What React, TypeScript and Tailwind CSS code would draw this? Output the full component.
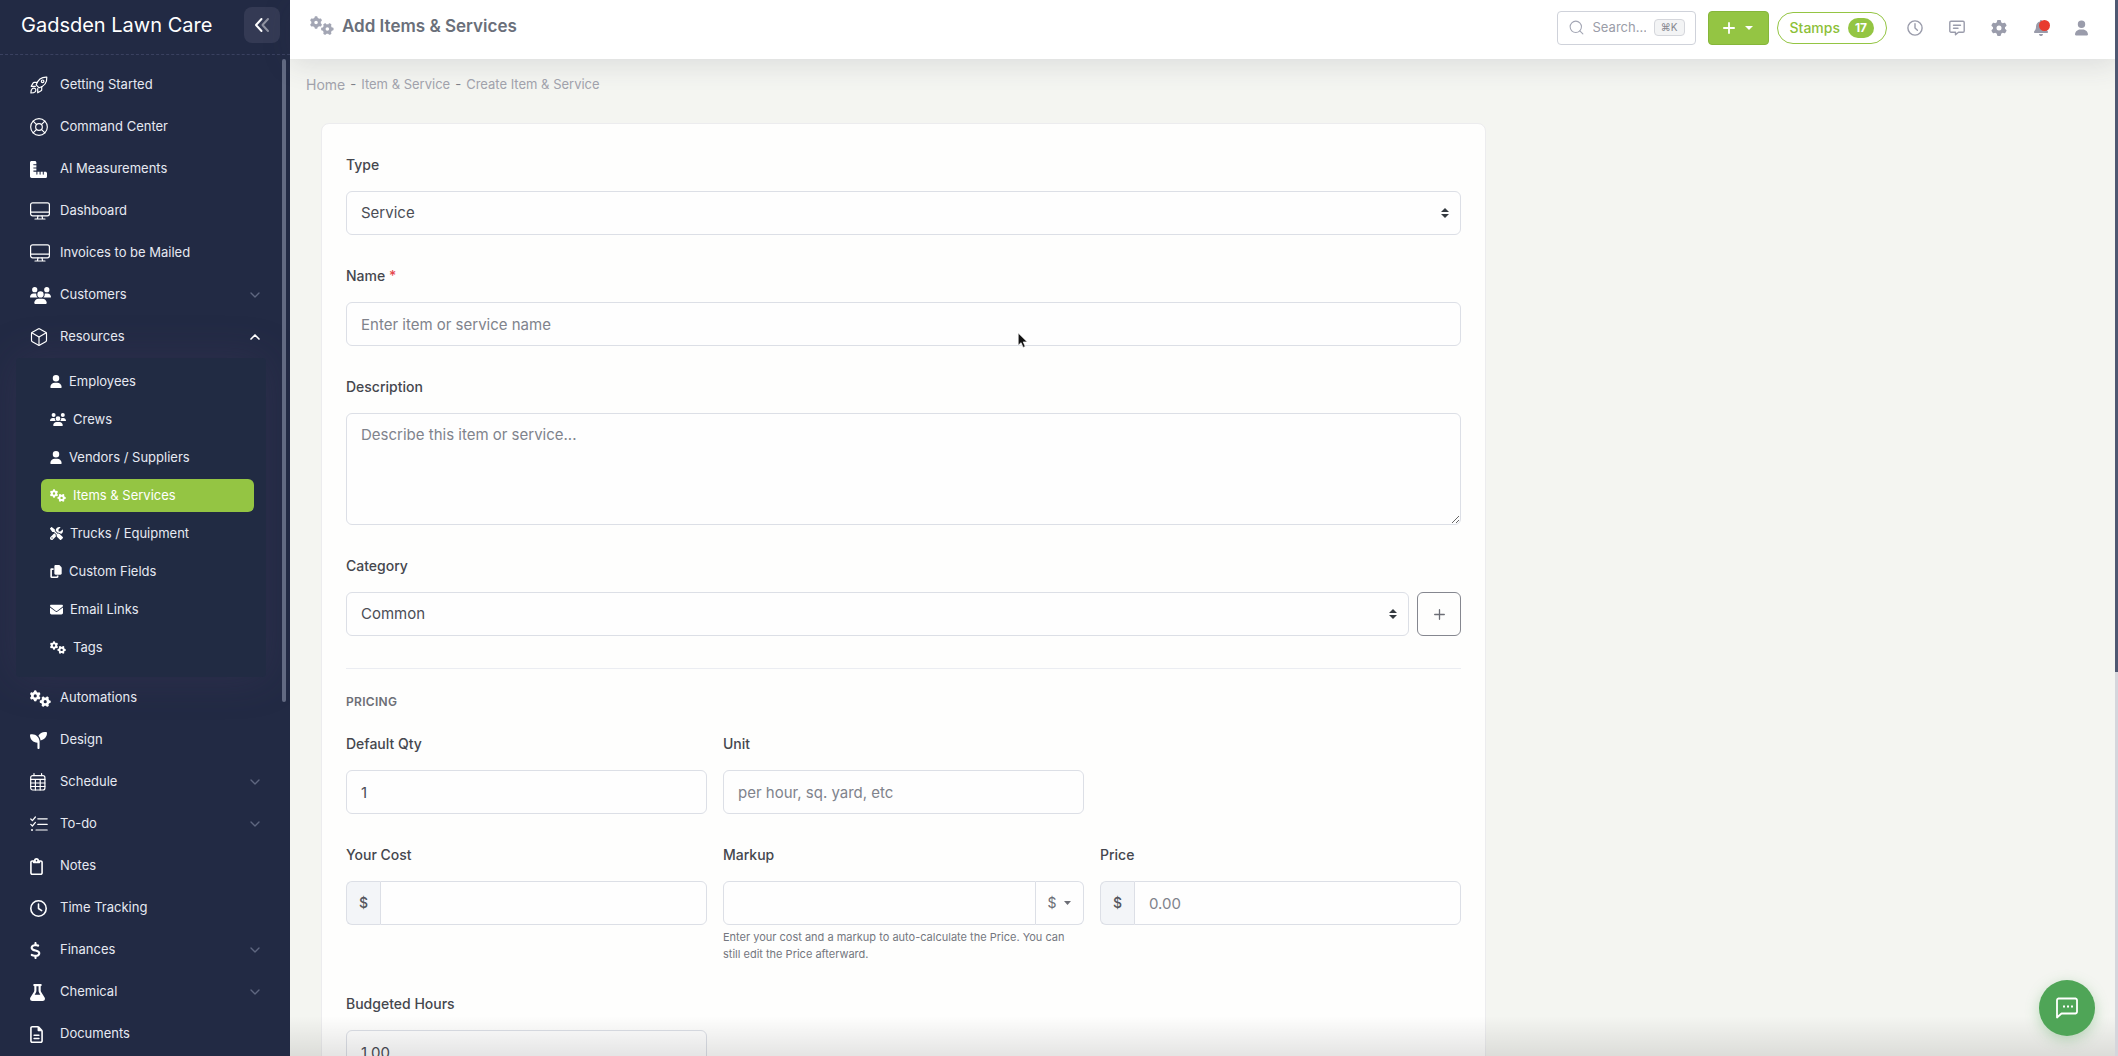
import React, { useState } from 'react';
import { Box, ChevronDown, ChevronUp, LifeBuoy, Search } from 'lucide-react';
import {
  FaBell,
  FaCopy,
  FaDollarSign,
  FaEnvelope,
  FaFlask,
  FaGear,
  FaGears,
  FaRegClipboard,
  FaRegClock,
  FaRegFileLines,
  FaRulerCombined,
  FaScrewdriverWrench,
  FaSeedling,
  FaUser,
  FaUsers,
} from 'react-icons/fa6';

interface MenuItem {
  label: string;
  icon: React.ReactNode;
  expandable?: boolean;
  children?: MenuItem[];
}

interface FieldProps {
  id: string;
  label: string;
  required?: boolean;
  children: React.ReactNode;
}

const inputClass =
  'block h-11 w-full min-w-0 rounded-md border border-[#dcdfe6] bg-[#fefefe] px-3.5 text-[15px] text-[#4b4d55] placeholder:text-[#80838c] outline-none focus:border-[#94c543]';

const addonClass =
  'flex w-[34px] shrink-0 items-center justify-center rounded-l-md border border-r-0 border-[#dcdfe6] bg-[#f3f5f8] text-sm font-medium text-[#55575e]';

function RocketIcon() {
  return (
    <svg className="h-[18px] w-[18px]" viewBox="0 0 18 18" fill="none" stroke="currentColor" strokeWidth="1.2" strokeLinecap="round" strokeLinejoin="round">
      <path d="M6.200 8.800C7.600 4.600 10.600.8 16.800 1.100c.4 6.200-3.400 9.300-7.700 10.700z" />
      <path d="M7.200 6.300H4.300c-.5 0-.9.2-1.100.6L1.200 10.300h4.200M11.700 10.800v2.900c0 .5-.2.900-.6 1.100L7.700 16.800v-4.200" />
      <path d="M5.300 12.700c-.8-.9-2.500-.8-3.300.1-.9.9-1.100 3.100-1.100 4.200 1.100 0 3.300-.2 4.200-1.100.9-.8 1-2.400.2-3.200z" />
      <circle cx="12.600" cy="5.300" r="1.300" />
    </svg>
  );
}

function DesktopIcon() {
  return (
    <svg className="h-[18px] w-5" viewBox="0 0 20 18" fill="none" stroke="currentColor" strokeWidth="1.2">
      <rect x="0.6" y="0.8" width="18.8" height="13" rx="2" />
      <path d="M0.6 10.2h18.8M8 13.8l-.6 3M12 13.8l.6 3M5 17h10" strokeLinecap="round" />
    </svg>
  );
}

function CalendarIcon() {
  return (
    <svg className="h-[18px] w-4" viewBox="0 0 16 18" fill="none" stroke="currentColor" strokeWidth="1.2">
      <rect x="0.7" y="2.6" width="14.2" height="14.4" rx="2" />
      <path d="M4 .6v2M11.6.6v2M.7 6.4h14.2M.7 10h14.2M.7 13.5h14.2M5.4 6.4V17M10.2 6.4V17" strokeLinecap="round" />
    </svg>
  );
}

function TasksIcon() {
  return (
    <svg className="h-[18px] w-[18px]" viewBox="0 0 18 18" fill="none" stroke="currentColor" strokeWidth="1.2" strokeLinecap="round" strokeLinejoin="round">
      <path d="M.8 4l1.6 1.6L5.4 2M.8 9.4L2.4 11l3-3.600M7.8 3.8h9.400M7.8 9.4h9.400M6 15h11.200" />
      <circle cx="2" cy="15" r="1" fill="currentColor" stroke="none" />
    </svg>
  );
}

function CollapseIcon() {
  return (
    <svg className="h-4 w-4" viewBox="0 0 16 16" fill="none" stroke="currentColor" strokeWidth="2" strokeLinecap="round" strokeLinejoin="round">
      <path d="M7.500 2L2 8l5.500 6" />
      <path d="M14 2L8.500 8l5.500 6" opacity="0.45" />
    </svg>
  );
}

function SortIcon() {
  return (
    <svg className="pointer-events-none absolute top-1/2 right-3 h-[10px] w-2 -translate-y-1/2" viewBox="0 0 8 10" fill="#343a40">
      <path d="M4 0L0 4h8zM4 10L0 6h8z" />
    </svg>
  );
}

function ClockIcon() {
  return (
    <svg className="h-4 w-4" viewBox="0 0 16 16" fill="none" stroke="currentColor" strokeWidth="1.4" strokeLinecap="round" strokeLinejoin="round">
      <circle cx="8" cy="8" r="7.100" />
      <path d="M8 3.800V8l2.400 2.200" />
    </svg>
  );
}

function MessageIcon() {
  return (
    <svg className="h-4 w-4" viewBox="0 0 16 16" fill="none" stroke="currentColor" strokeWidth="1.4" strokeLinejoin="round" strokeLinecap="round">
      <path d="M2 1.200h12a1.200 1.200 0 0 1 1.200 1.200v8.600a1.200 1.200 0 0 1-1.200 1.200H9.500L6.500 14.800v-2.600H2A1.200 1.200 0 0 1 .8 11V2.400A1.200 1.200 0 0 1 2 1.200z" />
      <path d="M4.500 5.200h7M4.500 8.200h4.500" />
    </svg>
  );
}

const menu: MenuItem[] = [
  { label: 'Getting Started', icon: <RocketIcon /> },
  { label: 'Command Center', icon: <LifeBuoy className="-ml-px h-5 w-5" strokeWidth={1.4} /> },
  { label: 'AI Measurements', icon: <FaRulerCombined className="h-[17px] w-[17px]" /> },
  { label: 'Dashboard', icon: <DesktopIcon /> },
  { label: 'Invoices to be Mailed', icon: <DesktopIcon /> },
  { label: 'Customers', icon: <FaUsers className="h-[17px] w-[21px]" />, expandable: true },
  {
    label: 'Resources',
    icon: <Box className="-ml-px h-5 w-5" strokeWidth={1.4} />,
    expandable: true,
    children: [
      { label: 'Employees', icon: <FaUser className="h-[13px] w-3" /> },
      { label: 'Crews', icon: <FaUsers className="h-[13px] w-4" /> },
      { label: 'Vendors / Suppliers', icon: <FaUser className="h-[13px] w-3" /> },
      { label: 'Items & Services', icon: <FaGears className="h-[13px] w-4" /> },
      { label: 'Trucks / Equipment', icon: <FaScrewdriverWrench className="h-[13px] w-[13px]" /> },
      { label: 'Custom Fields', icon: <FaCopy className="h-[13px] w-3" /> },
      { label: 'Email Links', icon: <FaEnvelope className="h-[13px] w-[13px]" /> },
      { label: 'Tags', icon: <FaGears className="h-[13px] w-4" /> },
    ],
  },
  { label: 'Automations', icon: <FaGears className="h-[17px] w-[21px]" /> },
  { label: 'Design', icon: <FaSeedling className="h-[17px] w-[17px]" /> },
  { label: 'Schedule', icon: <CalendarIcon />, expandable: true },
  { label: 'To-do', icon: <TasksIcon />, expandable: true },
  { label: 'Notes', icon: <FaRegClipboard className="h-[17px] w-[13px]" /> },
  { label: 'Time Tracking', icon: <FaRegClock className="h-[17px] w-[17px]" /> },
  { label: 'Finances', icon: <FaDollarSign className="h-[17px] w-[11px]" />, expandable: true },
  { label: 'Chemical', icon: <FaFlask className="h-[17px] w-[15px]" />, expandable: true },
  { label: 'Documents', icon: <FaRegFileLines className="h-[17px] w-[13px]" /> },
];

function Sidebar() {
  const [active, setActive] = useState('Items & Services');

  return (
    <aside className="relative flex w-[290px] shrink-0 flex-col bg-[#222a44] text-[#e6e9f2]">
      <div className="flex h-[55px] shrink-0 items-center justify-between border-b border-dashed border-[#3a4160] pr-2.5 pb-1 pl-[21px]">
        <span className="text-xl text-white">Gadsden Lawn Care</span>
        <button type="button" aria-label="Collapse sidebar" className="flex h-9 w-9 items-center justify-center rounded-lg bg-[#343a54] text-white">
          <CollapseIcon />
        </button>
      </div>
      <nav className="min-h-0 flex-1 overflow-hidden pt-[9px] text-[13px]">
        <ul>
          {menu.map(item => (
            <li key={item.label}>
              <a href="#" className="relative z-10 flex h-[42px] items-center pr-[27px] pl-[30px] hover:text-white">
                <span className="flex w-[30px] shrink-0 items-center text-white">{item.icon}</span>
                <span className="flex-1">{item.label}</span>
                {item.expandable &&
                  (item.children ? (
                    <ChevronUp className="h-4 w-4 text-white" strokeWidth={2.5} />
                  ) : (
                    <ChevronDown className="h-4 w-4 text-[#5f6780]" />
                  ))}
              </a>
              {item.children && (
                <ul className="mr-6 ml-4 flex flex-col gap-[5px] rounded bg-[#212b43] pt-[7px] pr-3 pb-[13px] pl-[25px] shadow-[0_0_40px_rgba(82,63,105,0.25)]">
                  {item.children.map(child => (
                    <li key={child.label}>
                      <a
                        href="#"
                        onClick={() => setActive(child.label)}
                        className={`flex h-[33px] items-center gap-[7px] rounded-md px-[9px] ${
                          active === child.label ? 'bg-[#94c543] text-white' : ''
                        }`}
                      >
                        <span className="text-white">{child.icon}</span>
                        {child.label}
                      </a>
                    </li>
                  ))}
                </ul>
              )}
            </li>
          ))}
        </ul>
      </nav>
      {/* scroll thumb */}
      <div className="absolute top-[59px] right-1 z-10 h-[643px] w-1 rounded-full bg-[#626a82]" />
    </aside>
  );
}

function Header() {
  return (
    <header className="relative z-10 flex h-[59px] shrink-0 items-center justify-between bg-white pr-[30px] pb-1 pl-5 shadow-[0_4px_30px_rgba(60,60,80,0.14)]">
      <div className="flex items-center gap-2 pb-1">
        <FaGears className="h-[19px] w-6 text-[#a3a6b4]" />
        <h1 className="text-[17px] leading-6 font-semibold text-[#6a6f7a]">Add Items &amp; Services</h1>
      </div>
      <div className="flex items-center">
        <label className="flex h-[34px] w-[139px] items-center gap-2 rounded border border-[#cfd2da] px-2.5">
          <Search className="h-[17px] w-[17px] shrink-0 text-[#a3a6b4]" strokeWidth={1.5} />
          <input type="text" aria-label="Search" placeholder="Search..." className="w-full min-w-0 text-[13px] outline-none placeholder:text-[#9a9da8]" />
          <kbd className="shrink-0 rounded border border-[#d5d7dc] bg-[#f3f4f5] px-1.5 font-[Inter,'DejaVu_Sans',sans-serif] text-[10px] text-[#85878f]">⌘K</kbd>
        </label>
        <button type="button" aria-label="Add new" className="ml-3 flex h-[34px] w-[61px] items-center justify-center gap-2.5 rounded border border-[#86b63a] bg-[#94c543] text-white">
          <svg className="h-3 w-3" viewBox="0 0 12 12" stroke="currentColor" strokeWidth="1.8" strokeLinecap="round">
            <path d="M6 .9v10.200M.9 6h10.200" />
          </svg>
          <svg className="h-1 w-2" viewBox="0 0 8 4" fill="currentColor">
            <path d="M0 0h8L4 4z" />
          </svg>
        </button>
        <button type="button" className="ml-2 flex h-8 items-center gap-2 rounded-full border border-[#94c543] px-3 text-sm font-medium text-[#8cc038]">
          Stamps
          <span className="flex h-5 w-[26px] items-center justify-center rounded-full bg-[#94c543] text-xs font-bold text-white">17</span>
        </button>
        <div className="ml-5 flex items-center gap-[26px] text-[#9a9cab]">
          <button type="button" aria-label="Time clock">
            <ClockIcon />
          </button>
          <button type="button" aria-label="Messages">
            <MessageIcon />
          </button>
          <button type="button" aria-label="Settings">
            <FaGear className="h-4 w-4" />
          </button>
          <button type="button" aria-label="Notifications" className="relative">
            <FaBell className="h-4 w-4" />
            <span className="absolute top-0 left-1.5 h-[11px] w-[11px] rounded-full bg-[#e83b2e]" />
          </button>
          <button type="button" aria-label="Account">
            <FaUser className="h-4 w-[13px]" />
          </button>
        </div>
      </div>
    </header>
  );
}

function Field({ id, label, required, children }: FieldProps) {
  return (
    <div>
      <label htmlFor={id} className="mb-4 block text-sm leading-5 font-medium text-[#45474e]">
        {label}
        {required && <span className="text-[#e5484d]"> *</span>}
      </label>
      {children}
    </div>
  );
}

function ItemForm() {
  const [type, setType] = useState('Service');
  const [category, setCategory] = useState('Common');

  return (
    <form className="mt-7 ml-[31px] max-w-[1165px] rounded-lg border border-[#ececee] bg-[#fefefd] px-6 pt-[31px] pb-8">
      <div className="flex flex-col gap-[31px]">
        <Field id="type" label="Type">
          <div className="relative">
            <select id="type" value={type} onChange={e => setType(e.target.value)} className={`${inputClass} appearance-none`}>
              <option>Service</option>
              <option>Item</option>
            </select>
            <SortIcon />
          </div>
        </Field>
        <Field id="name" label="Name" required>
          <input id="name" type="text" placeholder="Enter item or service name" className={inputClass} />
        </Field>
        <Field id="description" label="Description">
          <textarea
            id="description"
            placeholder="Describe this item or service..."
            className="block h-28 w-full resize rounded-md border border-[#dcdfe6] bg-[#fefefe] px-3.5 py-2.5 text-[15px] leading-[22px] text-[#4b4d55] outline-none placeholder:text-[#80838c]"
          />
        </Field>
        <Field id="category" label="Category">
          <div className="flex gap-2">
            <div className="relative flex-1">
              <select id="category" value={category} onChange={e => setCategory(e.target.value)} className={`${inputClass} appearance-none`}>
                <option>Common</option>
              </select>
              <SortIcon />
            </div>
            <button type="button" aria-label="Add category" className="flex h-11 w-11 items-center justify-center rounded-md border border-[#85878f] text-[#6c6e76]">
              <svg className="h-[11px] w-[11px]" viewBox="0 0 11 11" stroke="currentColor" strokeWidth="1.3" strokeLinecap="round">
                <path d="M5.500 .7v9.600M.7 5.500h9.600" />
              </svg>
            </button>
          </div>
        </Field>
      </div>

      <hr className="mt-8 border-[#ebedf2]" />
      <h2 className="mt-[23px] text-xs leading-5 font-semibold tracking-wide text-[#6c6e76]">PRICING</h2>

      <div className="mt-[22px] grid grid-cols-3 gap-x-4 gap-y-[31px]">
        <Field id="qty" label="Default Qty">
          <input id="qty" type="text" defaultValue="1" className={inputClass} />
        </Field>
        <Field id="unit" label="Unit">
          <input id="unit" type="text" placeholder="per hour, sq. yard, etc" className={inputClass} />
        </Field>
        <div />
        <Field id="cost" label="Your Cost">
          <div className="flex">
            <span className={addonClass}>$</span>
            <input id="cost" type="text" className={`${inputClass} rounded-l-none`} />
          </div>
        </Field>
        <Field id="markup" label="Markup">
          <div className="flex">
            <input id="markup" type="text" className={`${inputClass} rounded-r-none`} />
            <button type="button" className="flex w-12 shrink-0 items-center justify-center gap-2 rounded-r-md border border-l-0 border-[#dcdfe6] bg-[#fefefe] text-sm text-[#6c6e76]">
              $
              <svg className="h-1 w-[7px]" viewBox="0 0 7 4" fill="currentColor">
                <path d="M0 0h7L3.500 4z" />
              </svg>
            </button>
          </div>
          <p className="mt-1 text-[11px] leading-[17px] text-[#74777f]">
            Enter your cost and a markup to auto-calculate the Price. You can still edit the Price afterward.
          </p>
        </Field>
        <Field id="price" label="Price">
          <div className="flex">
            <span className={addonClass}>$</span>
            <input id="price" type="text" placeholder="0.00" className={`${inputClass} rounded-l-none`} />
          </div>
        </Field>
        <Field id="hours" label="Budgeted Hours">
          <input id="hours" type="text" defaultValue="1.00" className={inputClass} />
        </Field>
      </div>
    </form>
  );
}

export default function App() {
  return (
    <div className="relative flex h-screen overflow-hidden bg-[#f4f5f1] font-[Inter,sans-serif]">
      <Sidebar />
      <div className="flex min-w-0 flex-1 flex-col">
        <Header />
        <main className="min-h-0 flex-1 overflow-hidden pr-8 pt-4">
          <nav aria-label="Breadcrumb" className="flex h-5 items-center gap-[5px] pl-4 text-[13px] text-[#a2a3ad]">
            <a href="#" className="text-sm">Home</a>
            <span className="text-[#7e808a]">-</span>
            <a href="#">Item &amp; Service</a>
            <span className="text-[#7e808a]">-</span>
            <a href="#">Create Item &amp; Service</a>
          </nav>
          <ItemForm />
        </main>
      </div>

      {/* fade over the bottom edge of the content */}
      <div className="pointer-events-none absolute right-0 bottom-0 left-[290px] h-10 bg-gradient-to-b from-transparent to-black/10" />

      {/* page scrollbar */}
      <div className="absolute inset-y-0 right-0 z-20 w-[3px] bg-[#d5d6dc]">
        <div className="h-[672px] bg-[#4f5872]" />
      </div>

      <button
        type="button"
        aria-label="Open chat"
        className="absolute right-[23px] bottom-5 z-20 flex h-14 w-14 items-center justify-center rounded-full bg-[#4fa557] text-white shadow-[0_4px_14px_rgba(79,165,87,0.35)]"
      >
        <svg className="h-[22px] w-[22px]" viewBox="0 0 22 22" fill="none" stroke="currentColor" strokeWidth="1.8" strokeLinejoin="round">
          <path d="M2.500 1.500h17a2 2 0 0 1 1.500 1.500v12a2 2 0 0 1-1.500 1.500H5.500L1 20.500V3a2 2 0 0 1 1.500-1.500z" />
          <path d="M7 9.500h2M11 9.500h2M15 9.500h2" />
        </svg>
      </button>

      {/* mouse pointer */}
      <svg className="pointer-events-none absolute top-[332px] left-[1017px] z-30 h-[17px] w-3" viewBox="0 0 11 16">
        <path d="M1 1v11.500l2.700-2.500 1.900 4.500 2-.9-1.900-4.300H9.500z" fill="#111" stroke="#fff" strokeWidth="0.6" />
      </svg>
    </div>
  );
}
